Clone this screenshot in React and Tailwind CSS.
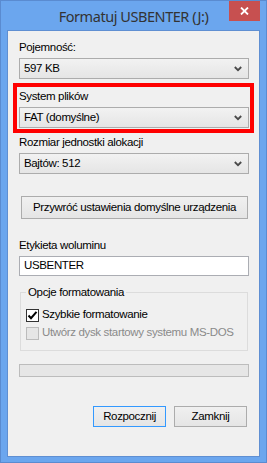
import React from 'react';

const Chevron = () => (
    <svg width="8" height="6" viewBox="0 0 8 6" className="shrink-0">
        <path d="M0.8 1 L4 4.2 L7.2 1" fill="none" stroke="#4a4a4a" strokeWidth="1.8" />
    </svg>
);

const Combo = ({ value }) => (
    <div className="h-[21px] flex items-center justify-between pl-[4px] pr-[6px] border border-[#acacac] bg-gradient-to-b from-[#f2f2f2] to-[#e5e5e5]">
        <span>{value}</span>
        <Chevron />
    </div>
);

const Label = ({ children }) => <div className="h-[15px] leading-[15px]">{children}</div>;

const CheckRow = ({ checked, disabled, children }) => (
    <div className="h-[18px] flex items-center gap-[3px]">
        <span
            className={
                disabled
                    ? 'w-[13px] h-[13px] shrink-0 border border-[#bcbcbc] bg-[#e6e6e6]'
                    : 'w-[13px] h-[13px] shrink-0 border border-[#333333] bg-white flex items-center justify-center'
            }
        >
            {checked && (
                <svg width="11" height="11" viewBox="0 0 11 11">
                    <path d="M1.5 5.5 L4 8.2 L9.5 1.8" fill="none" stroke="#000" strokeWidth="2" />
                </svg>
            )}
        </span>
        <span className={disabled ? 'text-[#8a8a8a]' : 'text-black'}>{children}</span>
    </div>
);

export default function App() {
    return (
        <div className="w-[267px] h-[463px] flex flex-col border border-[#5a8bd0] bg-[#6ba6ee] font-['Liberation_Sans',Arial,sans-serif] text-[11.5px] tracking-[-0.35px] whitespace-nowrap text-black">
            {/* title bar */}
            <div className="relative h-[29px] flex items-center justify-center">
                <span className="font-['Noto_Sans',sans-serif] text-[14.5px] tracking-[-0.45px] text-[#333333] pt-[2px]">Formatuj USBENTER (J:)</span>
                <button className="absolute right-[6px] top-0 w-[31px] h-[20px] bg-[#c75050] flex items-center justify-center">
                    <svg width="9" height="8" viewBox="0 0 9 8">
                        <path d="M1 0.5 L8 7.5 M8 0.5 L1 7.5" stroke="#fff" strokeWidth="1.8" />
                    </svg>
                </button>
            </div>

            {/* client area */}
            <div className="flex-1 mx-[6px] mb-[5px] border border-[#5f8fd2] bg-[#f0f0f0] pl-[11px] pr-[10px] pt-[9px] flex flex-col">
                <Label>Pojemność:</Label>
                <div className="mt-[3px]">
                    <Combo value="597 KB" />
                </div>

                <div className="mt-[4px] -ml-[6px] -mr-[5px] border-[4px] border-[#ff0000] pl-[2px] pr-[1px] pt-[2px] pb-[1px]">
                    <Label>System plików</Label>
                    <div className="mt-[3px]">
                        <Combo value="FAT (domyślne)" />
                    </div>
                </div>

                <div className="mt-[2px]">
                    <Label>Rozmiar jednostki alokacji</Label>
                </div>
                <div className="mt-[3px]">
                    <Combo value="Bajtów: 512" />
                </div>

                <button className="mt-[22px] ml-[2px] mr-[1px] h-[23px] border border-[#acacac] bg-gradient-to-b from-[#f0f0f0] to-[#e5e5e5] text-center">
                    Przywróć ustawienia domyślne urządzenia
                </button>

                <div className="mt-[19px]">
                    <Label>Etykieta woluminu</Label>
                </div>
                <div className="mt-[3px] h-[20px] flex items-center pl-[4px] border border-[#abadb3] bg-white">
                    USBENTER
                </div>

                <fieldset className="mt-[9px] ml-[1px] mr-[1px] border border-[#dcdcdc] pl-[5px] pt-[6px] pb-[8px]">
                    <legend className="px-[2px] h-[15px] leading-[15px]">Opcje formatowania</legend>
                    <CheckRow checked>Szybkie formatowanie</CheckRow>
                    <CheckRow disabled>Utwórz dysk startowy systemu MS-DOS</CheckRow>
                </fieldset>

                <div className="mt-[13px] h-[13px] border border-[#bcbcbc] bg-[#e6e6e6]" />

                <div className="mt-[29px] mr-[2px] flex justify-end gap-[8px]">
                    <button className="w-[73px] h-[21px] border border-[#3399ff] bg-gradient-to-b from-[#f0f0f0] to-[#e5e5e5]">
                        Rozpocznij
                    </button>
                    <button className="w-[73px] h-[21px] border border-[#acacac] bg-gradient-to-b from-[#f0f0f0] to-[#e5e5e5]">
                        Zamknij
                    </button>
                </div>
            </div>
        </div>
    );
}
